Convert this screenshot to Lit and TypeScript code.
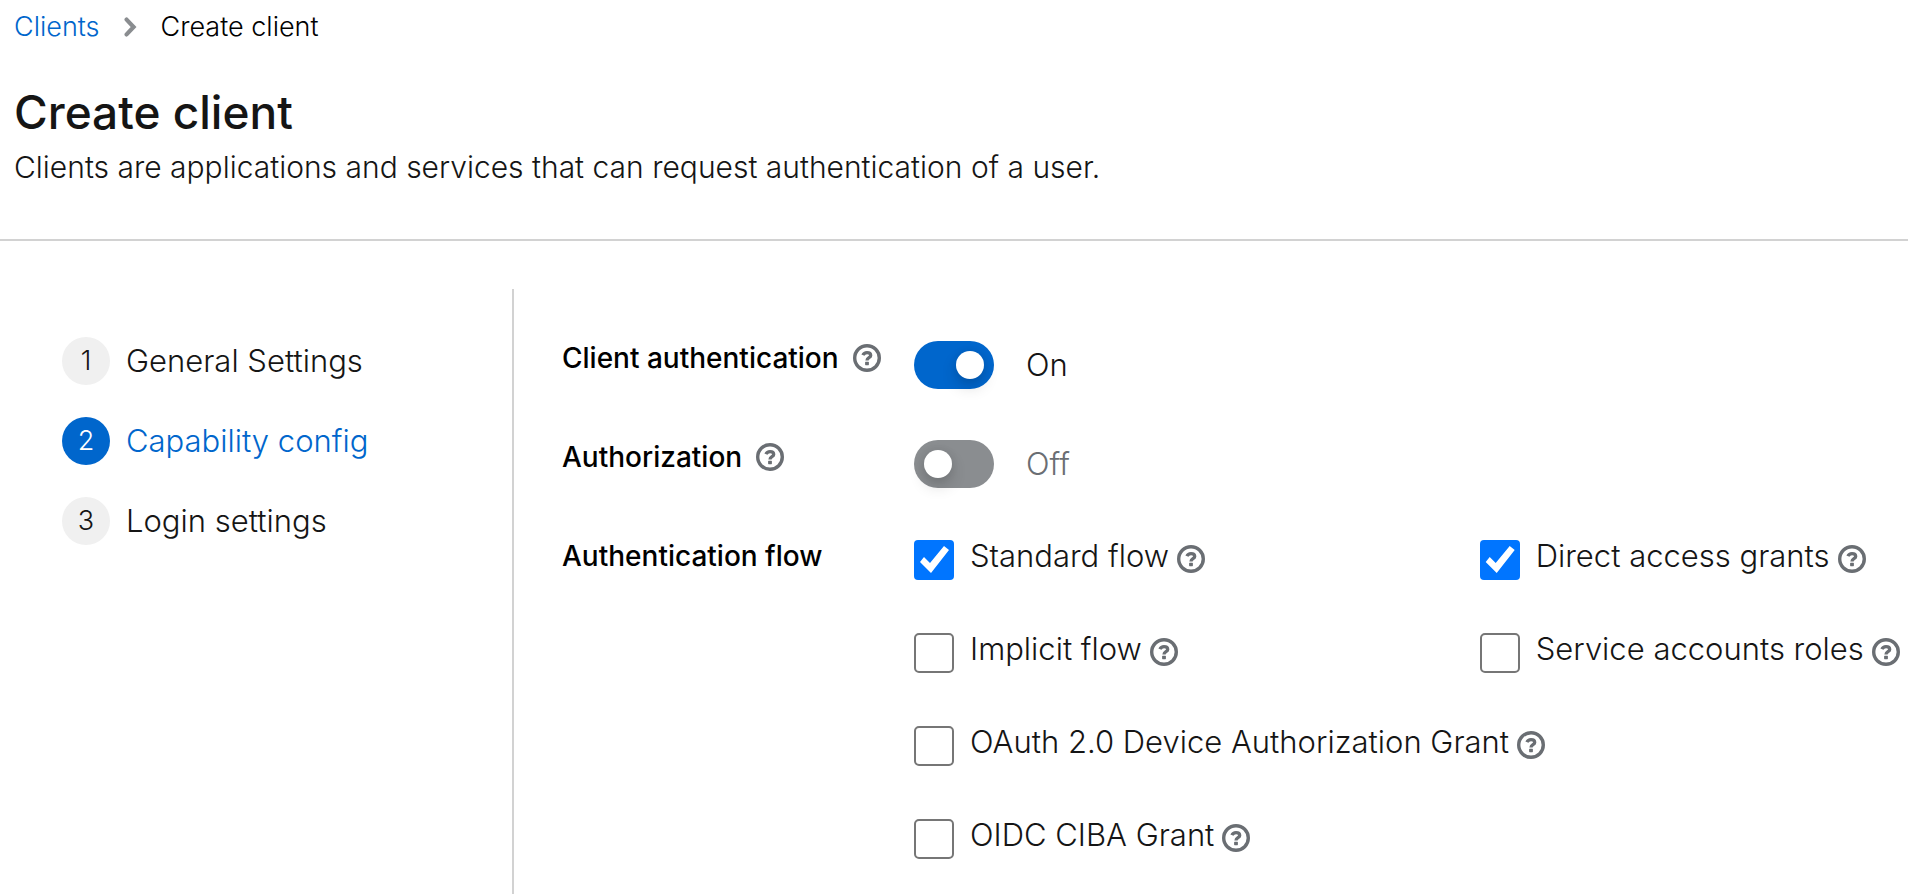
import { LitElement, html, css, nothing } from "lit";
import { customElement, property, state } from "lit/decorators.js";

@customElement("help-button")
export class HelpButton extends LitElement {
  static styles = css`
    :host {
      display: inline-flex;
    }
    .help {
      display: flex;
      padding: 0;
      border: 0;
      background: none;
      color: #6a6e73;
      cursor: pointer;
    }
    .icon {
      width: 28px;
      height: 28px;
    }
  `;

  @property() topic = "";

  render() {
    return html`
      <button class="help" type="button" aria-label="More info for ${this.topic}">
        <svg class="icon" viewBox="0 0 28 28" fill="none" aria-hidden="true">
          <circle cx="14" cy="14" r="12.3" stroke="currentColor" stroke-width="3.4" />
          <path
            d="M9.9 11.2C10.7 9.4 12.1 8.6 14 8.6C16.3 8.6 17.7 9.7 17.7 11.4C17.7 13.7 14 13.6 14 16.4"
            stroke="currentColor"
            stroke-width="3.3"
          />
          <rect x="12.1" y="17.7" width="3.8" height="3.5" rx="0.6" fill="currentColor" />
        </svg>
      </button>
    `;
  }
}

interface Flow {
  id: string;
  label: string;
  checked: boolean;
  wide?: boolean;
}

@customElement("app-root")
export class AppRoot extends LitElement {
  static styles = css`
    :host {
      display: flex;
      flex-direction: column;
      min-height: 100vh;
      background: #fff;
      color: #151515;
      font: 300 31px/48px Inter, "Open Sans", sans-serif;
    }
    * {
      box-sizing: border-box;
    }
    a {
      color: #06c;
      text-decoration: none;
    }
    .header {
      padding: 5px 14px 48px;
      border-bottom: 2px solid #d2d2d2;
    }
    .crumbs {
      display: flex;
      align-items: center;
      gap: 24px;
      margin: 0 0 35px;
      padding: 0;
      list-style: none;
      color: #000;
      font-size: 27px;
      line-height: 44px;
    }
    .crumb {
      display: flex;
      align-items: center;
      gap: 24px;
    }
    .chevron {
      width: 13px;
      height: 20px;
    }
    .title {
      margin: 0 0 3px;
      font-size: 46px;
      font-weight: 500;
      line-height: 56px;
    }
    .subtitle {
      margin: 0;
      font-size: 30px;
    }
    .wizard {
      flex: 1;
      display: flex;
      padding-top: 48px;
    }
    .nav {
      flex: none;
      width: 514px;
      padding: 48px 48px 0 62px;
      border-right: 2px solid #d2d2d2;
    }
    .steps {
      display: grid;
      gap: 32px;
      margin: 0;
      padding: 0;
      list-style: none;
    }
    .step {
      display: flex;
      gap: 16px;
      color: #151515;
    }
    .number {
      width: 48px;
      border-radius: 50%;
      background: #f0f0f0;
      font-size: 27px;
      text-align: center;
    }
    .step.current {
      color: #06c;
    }
    .current .number {
      background: #06c;
      color: #fff;
    }
    .form {
      flex: 1;
      display: grid;
      grid-template-columns: 320px 1fr;
      align-content: start;
      column-gap: 32px;
      row-gap: 51px;
      padding: 45px 16px 0 48px;
    }
    .name {
      display: flex;
      align-items: center;
      align-self: start;
      gap: 14px;
      color: #000;
      font-size: 28px;
      font-weight: 500;
      white-space: nowrap;
    }
    .switch {
      display: flex;
      gap: 32px;
      justify-self: start;
      padding-top: 7px;
      margin-bottom: -7px;
      cursor: pointer;
    }
    .toggle {
      appearance: none;
      display: flex;
      align-items: center;
      width: 80px;
      height: 48px;
      margin: 0;
      padding: 0 10px;
      border-radius: 24px;
      background: #8a8d90;
      cursor: pointer;
    }
    .toggle::before {
      content: "";
      width: 28px;
      height: 28px;
      border-radius: 50%;
      background: #fff;
      box-shadow: 0 8px 16px rgba(3, 3, 3, 0.16), 0 0 8px rgba(3, 3, 3, 0.08);
    }
    .toggle:checked {
      justify-content: flex-end;
      background: #06c;
    }
    .off {
      color: #6a6e73;
    }
    .flows {
      display: grid;
      grid-template-columns: minmax(0, 4fr) minmax(0, 3fr);
      column-gap: 16px;
      row-gap: 45px;
      min-width: 0;
      margin: 0;
      padding: 0;
      border: 0;
    }
    .flow {
      display: flex;
      gap: 16px;
      white-space: nowrap;
    }
    .wide {
      grid-column: 1 / -1;
    }
    .box {
      appearance: none;
      flex: none;
      width: 40px;
      height: 40px;
      margin: 8px 0 0;
      border: 2px solid #767676;
      border-radius: 5px;
      background: #fff;
    }
    .box:checked {
      border: 0;
      border-radius: 4px;
      background: #0075ff;
    }
    .box:checked::before {
      content: "";
      display: block;
      height: 100%;
      background: #fff;
      clip-path: polygon(6px 22px, 10px 17px, 16px 23px, 30px 6px, 35px 10px, 17px 33px);
    }
    .text {
      display: flex;
      align-items: center;
      gap: 8px;
    }
    .text help-button {
      padding-top: 6px;
    }
  `;

  @state() private clientAuth = true;
  @state() private authorization = false;

  private steps = ["General Settings", "Capability config", "Login settings"];

  private flows: Flow[] = [
    { id: "standard", label: "Standard flow", checked: true },
    { id: "direct", label: "Direct access grants", checked: true },
    { id: "implicit", label: "Implicit flow", checked: false },
    { id: "service", label: "Service accounts roles", checked: false },
    { id: "device", label: "OAuth 2.0 Device Authorization Grant", checked: false, wide: true },
    { id: "ciba", label: "OIDC CIBA Grant", checked: false, wide: true },
  ];

  private renderSwitch(id: string, label: string, on: boolean, toggle: () => void) {
    return html`
      <div class="name">
        <label for=${id}>${label}</label>
        <help-button topic=${label}></help-button>
      </div>
      <label class="switch ${on ? "" : "off"}">
        <input class="toggle" id=${id} type="checkbox" role="switch" .checked=${on} @change=${toggle} />
        <span>${on ? "On" : "Off"}</span>
      </label>
    `;
  }

  render() {
    return html`
      <header class="header">
        <nav aria-label="Breadcrumb">
          <ol class="crumbs">
            <li><a href="#clients">Clients</a></li>
            <li class="crumb" aria-current="page">
              <svg class="chevron" viewBox="0 0 13 20" fill="none" aria-hidden="true">
                <path d="M2.6 2.6L9.6 10L2.6 17.4" stroke="#8a8d90" stroke-width="4.2" stroke-linecap="round" />
              </svg>
              Create client
            </li>
          </ol>
        </nav>
        <h1 class="title">Create client</h1>
        <p class="subtitle">
          Clients are applications and services that can request authentication of a user.
        </p>
      </header>
      <main class="wizard">
        <nav class="nav" aria-label="Steps">
          <ol class="steps">
            ${this.steps.map(
              (step, i) => html`
                <li>
                  <a
                    class="step ${i === 1 ? "current" : ""}"
                    href="#step-${i + 1}"
                    aria-current=${i === 1 ? "step" : nothing}
                  >
                    <span class="number">${i + 1}</span><span>${step}</span>
                  </a>
                </li>
              `
            )}
          </ol>
        </nav>
        <form class="form">
          ${this.renderSwitch("client-auth", "Client authentication", this.clientAuth, () => {
            this.clientAuth = !this.clientAuth;
          })}
          ${this.renderSwitch("authorization", "Authorization", this.authorization, () => {
            this.authorization = !this.authorization;
          })}
          <div class="name" id="flow-label">Authentication flow</div>
          <fieldset class="flows" aria-labelledby="flow-label">
            ${this.flows.map(
              (flow) => html`
                <div class="flow ${flow.wide ? "wide" : ""}">
                  <input class="box" id=${flow.id} type="checkbox" ?checked=${flow.checked} />
                  <div class="text">
                    <label for=${flow.id}>${flow.label}</label>
                    <help-button topic=${flow.label}></help-button>
                  </div>
                </div>
              `
            )}
          </fieldset>
        </form>
      </main>
    `;
  }
}
